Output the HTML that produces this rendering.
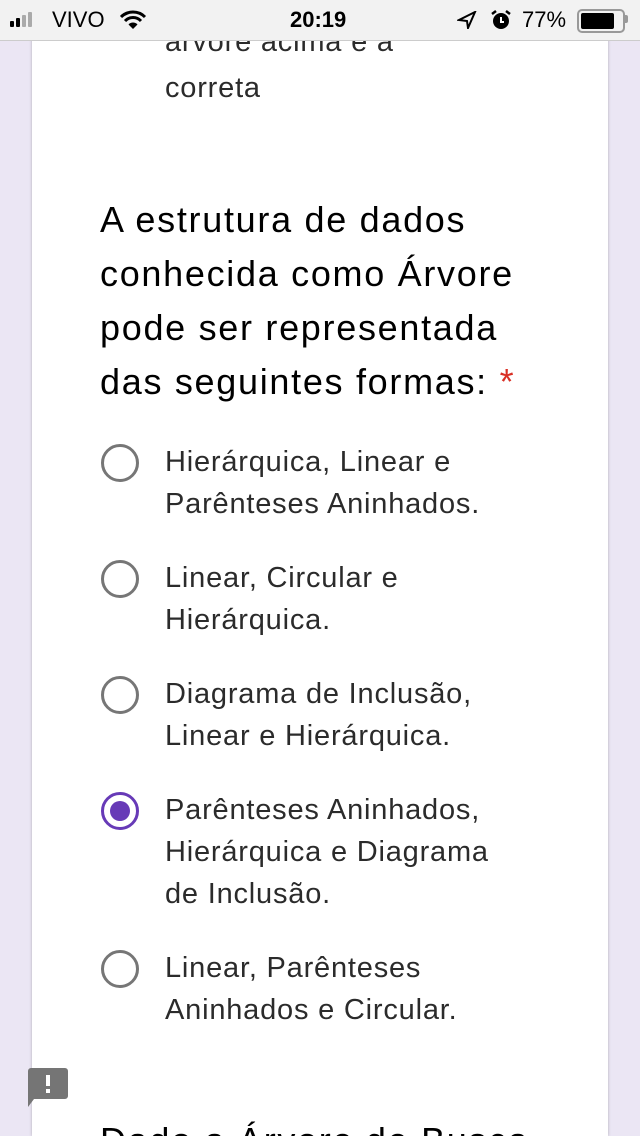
<!DOCTYPE html>
<html><head><meta charset="utf-8"><style>
html,body{margin:0;width:640px;height:1136px;overflow:hidden}
body{background:#ebe6f4;font-family:"Liberation Sans",Arial,sans-serif;position:relative}
.sb{position:absolute;left:0;top:0;width:640px;height:40px;background:#f2f2f2;border-bottom:1px solid #ccc;z-index:5}
.card{position:absolute;left:32px;top:0;width:576px;height:1136px;background:#fff;box-shadow:0 0 3px rgba(0,0,0,.25)}
.t{position:absolute;white-space:nowrap;color:#202124}
.q{font-size:36px;letter-spacing:1.7px;color:#000}
.o{font-size:29px;color:#2b2b2b;letter-spacing:0.8px}
.r{position:absolute;left:101px;width:32px;height:32px;border:3px solid #767676;border-radius:50%}
.r.s{border-color:#673ab7}
.r.s::after{content:"";position:absolute;left:6px;top:6px;width:20px;height:20px;border-radius:50%;background:#673ab7}
</style></head><body>
<div class="sb">
 <svg style="position:absolute;left:10px;top:12px" width="36" height="16"><rect x="0" y="9" width="4" height="6" rx="1" fill="#000"/><rect x="6" y="6" width="4" height="9" rx="1" fill="#000"/><rect x="12" y="3" width="4" height="12" rx="1" fill="#aaa"/><rect x="18" y="0" width="4" height="15" rx="1" fill="#aaa"/></svg>
 <span class="t" style="left:52px;top:7px;font-size:22px;color:#000">VIVO</span>
 <svg style="position:absolute;left:119px;top:10px" width="28" height="20" viewBox="0 0 28 20"><path d="M2 7 A17 17 0 0 1 26 7" stroke="#000" stroke-width="3" fill="none"/><path d="M6 11 A11 11 0 0 1 22 11" stroke="#000" stroke-width="3" fill="none"/><path d="M14 19 L9.5 14.5 A6 6 0 0 1 18.5 14.5 Z" fill="#000"/></svg>
 <span class="t" style="left:290px;top:7px;font-size:22px;font-weight:bold;color:#000">20:19</span>
 <svg style="position:absolute;left:457px;top:11px" width="20" height="18"><path d="M18 1 L2 9 L10 10 L11 17 Z" fill="none" stroke="#000" stroke-width="2"/></svg>
 <svg style="position:absolute;left:490px;top:9px" width="22" height="22"><circle cx="11" cy="12" r="8" fill="#000"/><path d="M11 8v5h3" stroke="#fff" stroke-width="2" fill="none"/><path d="M2 5l4-3M20 5l-4-3" stroke="#000" stroke-width="2.5"/></svg>
 <span class="t" style="left:522px;top:7px;font-size:22px;color:#000">77%</span>
 <div style="position:absolute;left:577px;top:9px;width:44px;height:20px;border:2px solid #999;border-radius:5px"><div style="margin:2px;width:33px;height:16px;background:#000;border-radius:2px"></div></div>
 <div style="position:absolute;left:625px;top:15px;width:3px;height:8px;background:#999;border-radius:0 2px 2px 0"></div>
</div>
<div class="card"></div>
<div class="t o" style="left:165px;top:26px">arvore acima e a</div>
<div class="t o" style="left:165px;top:72px">correta</div>
<div class="t q" style="left:100px;top:199px">A estrutura de dados</div>
<div class="t q" style="left:100px;top:253px">conhecida como Árvore</div>
<div class="t q" style="left:100px;top:307px">pode ser representada</div>
<div class="t q" style="left:100px;top:361px">das seguintes formas: <span style="color:#d93025">*</span></div>

<div class="r" style="top:444px"></div>
<div class="t o" style="left:165px;top:446px">Hierárquica, Linear e</div>
<div class="t o" style="left:165px;top:488px">Parênteses Aninhados.</div>

<div class="r" style="top:560px"></div>
<div class="t o" style="left:165px;top:562px">Linear, Circular e</div>
<div class="t o" style="left:165px;top:604px">Hierárquica.</div>

<div class="r" style="top:676px"></div>
<div class="t o" style="left:165px;top:678px">Diagrama de Inclusão,</div>
<div class="t o" style="left:165px;top:720px">Linear e Hierárquica.</div>

<div class="r s" style="top:792px"></div>
<div class="t o" style="left:165px;top:794px">Parênteses Aninhados,</div>
<div class="t o" style="left:165px;top:836px">Hierárquica e Diagrama</div>
<div class="t o" style="left:165px;top:878px">de Inclusão.</div>

<div class="r" style="top:950px"></div>
<div class="t o" style="left:165px;top:952px">Linear, Parênteses</div>
<div class="t o" style="left:165px;top:994px">Aninhados e Circular.</div>

<svg style="position:absolute;left:28px;top:1068px" width="40" height="40"><path d="M3 0 H37 A3 3 0 0 1 40 3 V28 A3 3 0 0 1 37 31 H6 L0 39 V3 A3 3 0 0 1 3 0Z" fill="#757575"/><rect x="18" y="7" width="4" height="11" fill="#fff"/><rect x="18" y="21" width="4" height="4" fill="#fff"/></svg>

<div class="t q" style="left:100px;top:1120px">Dado a Árvore de Busca</div>
</body></html>
